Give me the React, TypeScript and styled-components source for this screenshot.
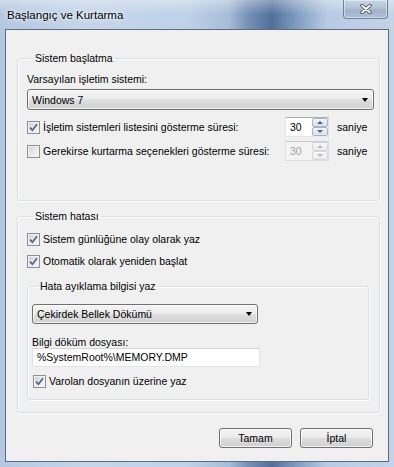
import React from 'react';
import styled, { createGlobalStyle } from 'styled-components';

const Global = createGlobalStyle`
  html, body { margin: 0; padding: 0; }
  body {
    width: 394px; height: 467px; overflow: hidden;
    font-family: "Liberation Sans", Arial, sans-serif;
    font-size: 10.5px; color: #000;
  }
  * { box-sizing: border-box; }
`;

const Window = styled.div`
  width: 394px; height: 467px;
  display: flex; flex-direction: column;
  padding: 0 5px 5px 5px;
  background:
    linear-gradient(180deg, rgba(255,255,255,0.35) 0px, rgba(255,255,255,0) 14px),
    linear-gradient(90deg, #b4c8e1 0%, #c5d6ea 22%, #bed1e7 48%, #a7bdd8 58%, #7690b6 63%, #52709b 69%, #7f9abf 75%, #b7cbe3 83%, #c3d4e8 100%);
`;

const TitleBar = styled.div`
  height: 29px; flex: none;
  display: flex; align-items: flex-start; justify-content: space-between;
`;

const Title = styled.div`
  margin: 8px 0 0 2px;
  line-height: 14px;
  font-size: 11.5px;
  color: #000;
  text-shadow: 0 0 6px rgba(255,255,255,0.95), 0 0 3px rgba(255,255,255,0.9);
`;

const CloseBtn = styled.div`
  width: 45px; height: 19px;
  margin-right: 1px;
  display: flex; align-items: center; justify-content: center;
  border: 1px solid #6f829c; border-top: none;
  border-radius: 0 0 4px 4px;
  background: linear-gradient(180deg, #c9d5e3 0%, #b3c3d7 45%, #9fb2ca 55%, #aebfd4 100%);
  box-shadow: inset 0 0 0 1px rgba(255,255,255,0.45);
`;

const Client = styled.div`
  flex: 1;
  border: 1px solid #5d6c80;
  background: #f0f0f0;
  display: flex; flex-direction: column;
  padding: 21px 8px 0 11px;
`;

const Group = styled.fieldset<{ $pad: string; $mt?: number }>`
  margin: ${p => p.$mt ?? 0}px 0 0 0;
  padding: ${p => p.$pad};
  border: 1px solid #d5dfe5;
  border-radius: 3px;
  box-shadow: inset 1px 1px 0 #fff, 1px 1px 0 #fff;
  min-width: 0;
  display: flex; flex-direction: column; align-items: stretch;
`;

const Legend = styled.legend`
  padding: 0 2px;
  margin-left: 6px;
  line-height: 14px;
`;

const Label = styled.div<{ $mt?: number }>`
  margin-top: ${p => p.$mt ?? 0}px;
  line-height: 12px;
  white-space: nowrap;
`;

const Combo = styled.div<{ $mt?: number; $w?: number; $h?: number }>`
  margin-top: ${p => p.$mt ?? 0}px;
  ${p => (p.$w ? `width: ${p.$w}px;` : '')}
  height: ${p => p.$h ?? 21}px;
  border: 1px solid #707070;
  border-radius: 3px;
  background: linear-gradient(180deg, #f4f4f4 0%, #ececec 48%, #dedede 52%, #d2d2d2 100%);
  box-shadow: inset 0 0 0 1px rgba(255,255,255,0.7);
  display: flex; align-items: center; justify-content: space-between;
  padding: 0 5px 0 4px;
  white-space: nowrap;
`;

const Arrow = styled.span`
  width: 0; height: 0;
  border-left: 3.5px solid transparent;
  border-right: 3.5px solid transparent;
  border-top: 4px solid #000;
`;

const TimeRow = styled.div<{ $mt?: number }>`
  margin-top: ${p => p.$mt ?? 0}px;
  height: 20px;
  display: grid;
  grid-template-columns: 250px 44px auto;
  column-gap: 8px;
  align-items: center;
`;

const CheckRow = styled.div<{ $mt?: number }>`
  margin-top: ${p => p.$mt ?? 0}px;
  height: 16px;
  display: flex; align-items: center; gap: 3px;
  white-space: nowrap;
`;

const Box = styled.span<{ $indent?: number }>`
  flex: none;
  width: 13px; height: 13px;
  margin-left: ${p => p.$indent ?? 0}px;
  border: 1px solid #8e8f8f;
  background: linear-gradient(135deg, #c9ccd1 0%, #e6e7e9 45%, #f7f7f7 100%);
  box-shadow: inset 0 0 0 1px #f2f2f2;
  display: flex; align-items: center; justify-content: center;
`;

const Spin = styled.div<{ $disabled?: boolean }>`
  height: 20px;
  display: flex;
  border: 1px solid;
  border-color: ${p => (p.$disabled ? '#c5c7cb #dadde2 #dadde2 #dadde2' : '#abadb3 #dbdfe6 #e3e9ef #e2e3ea')};
  background: ${p => (p.$disabled ? '#f4f4f4' : '#fff')};
`;

const SpinValue = styled.div<{ $disabled?: boolean }>`
  flex: 1;
  padding-left: 4px;
  line-height: 18px;
  color: ${p => (p.$disabled ? '#a0a0a0' : '#000')};
`;

const SpinButtons = styled.div`
  width: 16px;
  display: flex; flex-direction: column;
`;

const SpinBtn = styled.div<{ $disabled?: boolean }>`
  flex: 1;
  border: 1px solid ${p => (p.$disabled ? '#d4d6d9' : '#a7b3c6')};
  border-radius: 2px;
  background: ${p =>
    p.$disabled
      ? 'linear-gradient(180deg, #f7f7f7, #ececec)'
      : 'linear-gradient(180deg, #f3f6fa, #d9e2ee)'};
  display: flex; align-items: center; justify-content: center;
`;

const Tri = styled.span<{ $up?: boolean; $disabled?: boolean }>`
  width: 0; height: 0;
  border-left: 3px solid transparent;
  border-right: 3px solid transparent;
  ${p =>
    p.$up
      ? `border-bottom: 3px solid ${p.$disabled ? '#b8bcc2' : '#4d6185'};`
      : `border-top: 3px solid ${p.$disabled ? '#b8bcc2' : '#4d6185'};`}
`;

const TextField = styled.div<{ $mt?: number; $w: number }>`
  margin-top: ${p => p.$mt ?? 0}px;
  width: ${p => p.$w}px;
  height: 19px;
  border: 1px solid #e2e6eb;
  border-top-color: #d2d7de;
  background: #fff;
  padding-left: 4px;
  line-height: 17px;
  white-space: nowrap;
`;

const ButtonBar = styled.div`
  margin-top: 15px;
  padding-right: 7px;
  display: flex; justify-content: flex-end; gap: 8px;
`;

const Button = styled.button`
  width: 73px; height: 20px;
  padding: 0;
  font: inherit;
  color: #000;
  border: 1px solid #707070;
  border-radius: 3px;
  background: linear-gradient(180deg, #f3f3f3 0%, #ebebeb 48%, #dddddd 52%, #cfcfcf 100%);
  box-shadow: inset 0 0 0 1px rgba(255,255,255,0.75);
`;

const Check = () => (
  <svg width="9" height="9" viewBox="0 0 9 9">
    <path d="M1 4.6 L3.4 7.2 L8 1.2" fill="none" stroke="#4a5f8f" strokeWidth="1.6" />
  </svg>
);

const CheckBox = ({ checked, indent }: { checked?: boolean; indent?: number }) => (
  <Box $indent={indent}>{checked && <Check />}</Box>
);

const SpinBox = ({ value, disabled }: { value: string; disabled?: boolean }) => (
  <Spin $disabled={disabled}>
    <SpinValue $disabled={disabled}>{value}</SpinValue>
    <SpinButtons>
      <SpinBtn $disabled={disabled}><Tri $up $disabled={disabled} /></SpinBtn>
      <SpinBtn $disabled={disabled}><Tri $disabled={disabled} /></SpinBtn>
    </SpinButtons>
  </Spin>
);

export default function App() {
  return (
    <>
      <Global />
      <Window>
        <TitleBar>
          <Title>Başlangıç ve Kurtarma</Title>
          <CloseBtn>
            <svg width="12" height="10" viewBox="0 0 12 10">
              <path d="M2 1.5 L10 8.5 M10 1.5 L2 8.5" stroke="#3a4150" strokeWidth="3.4" strokeLinecap="round" />
              <path d="M2 1.5 L10 8.5 M10 1.5 L2 8.5" stroke="#ffffff" strokeWidth="1.8" strokeLinecap="round" />
            </svg>
          </CloseBtn>
        </TitleBar>
        <Client>
          <Group $pad="0 5px 39px 9px">
            <Legend>Sistem başlatma</Legend>
            <Label $mt={8}>Varsayılan işletim sistemi:</Label>
            <Combo $mt={4}>
              <span>Windows 7</span>
              <Arrow />
            </Combo>
            <TimeRow $mt={7}>
              <CheckRow>
                <CheckBox checked />
                <span>İşletim sistemleri listesini gösterme süresi:</span>
              </CheckRow>
              <SpinBox value="30" />
              <span>saniye</span>
            </TimeRow>
            <TimeRow $mt={4}>
              <CheckRow>
                <CheckBox />
                <span>Gerekirse kurtarma seçenekleri gösterme süresi:</span>
              </CheckRow>
              <SpinBox value="30" disabled />
              <span>saniye</span>
            </TimeRow>
          </Group>
          <Group $pad="0 10px 12px 9px" $mt={8}>
            <Legend>Sistem hatası</Legend>
            <CheckRow $mt={8}>
              <CheckBox checked />
              <span>Sistem günlüğüne olay olarak yaz</span>
            </CheckRow>
            <CheckRow $mt={6}>
              <CheckBox checked />
              <span>Otomatik olarak yeniden başlat</span>
            </CheckRow>
            <Group $pad="0 0 10px 4px" $mt={10}>
              <Legend>Hata ayıklama bilgisi yaz</Legend>
              <Combo $mt={11} $w={226} $h={20}>
                <span>Çekirdek Bellek Dökümü</span>
                <Arrow />
              </Combo>
              <Label $mt={12}>Bilgi döküm dosyası:</Label>
              <TextField $w={228}>%SystemRoot%\MEMORY.DMP</TextField>
              <CheckRow $mt={6}>
                <CheckBox checked indent={1} />
                <span>Varolan dosyanın üzerine yaz</span>
              </CheckRow>
            </Group>
          </Group>
          <ButtonBar>
            <Button>Tamam</Button>
            <Button>İptal</Button>
          </ButtonBar>
        </Client>
      </Window>
    </>
  );
}
